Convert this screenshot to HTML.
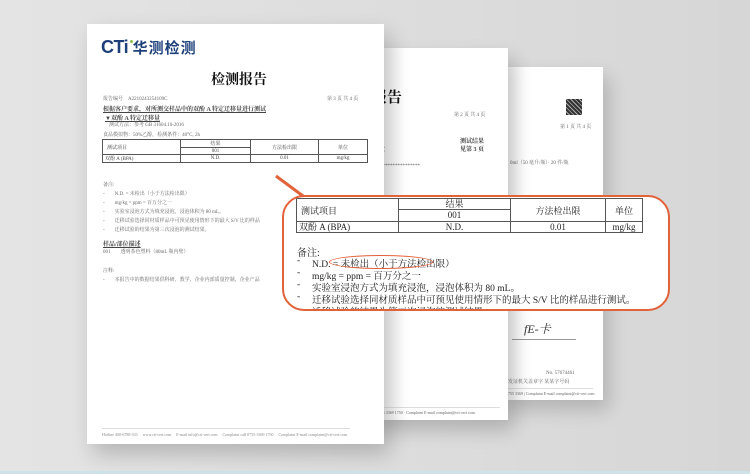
<!DOCTYPE html>
<html><head><meta charset="utf-8"><style>
*{margin:0;padding:0;box-sizing:border-box}
body{width:750px;height:474px;overflow:hidden;position:relative;background:linear-gradient(90deg,#e4e4e4 0%,#dcdcdc 60%,#d6d6d6 100%);font-family:"Liberation Serif","Noto Serif CJK SC",serif;color:#222}
.a{position:absolute;white-space:nowrap}
.pg{position:absolute;background:#fff}
.s{font-size:5px;color:#666}
.s6{font-size:6px;color:#444}
</style></head><body>
<div class="a" style="left:0;top:471px;width:750px;height:3px;background:#cfe2ea"></div>
<!-- page 3 -->
<div class="pg" style="left:500px;top:67px;width:103px;height:333px;box-shadow:6px 10px 18px rgba(0,0,0,.18);background:linear-gradient(90deg,#eee,#fff 25%)">
<div class="a" style="left:66px;top:32px;width:16px;height:16px;background:repeating-linear-gradient(45deg,#333 0 2px,#aaa 2px 3px)"></div>
<div class="a s" style="left:60px;top:56px">第 1 页 共 4 页</div>
<div class="a s" style="left:10px;top:92px">0ml（50 毫升/瓶）· 20 件/瓶</div>
<div class="a" style="left:24px;top:253px;font-size:12px;font-style:italic;color:#333">fЕ-卡</div>
<div class="a" style="left:12px;top:272px;width:64px;height:1px;background:#999"></div>
<div class="a s" style="left:46px;top:304px">No. 57674461</div>
<div class="a s" style="left:8px;top:311px">发证机关盖章字 某某字号码</div>
<div class="a" style="left:8px;top:321px;width:85px;height:1px;background:#ddd"></div>
<div class="a s" style="left:8px;top:324px;font-size:4px">755 3369 | Complaint E-mail complaint@cti-cert.com</div>
</div>
<!-- page 2 -->
<div class="pg" style="left:370px;top:48px;width:138px;height:372px;box-shadow:6px 10px 18px rgba(0,0,0,.2);background:linear-gradient(90deg,#e8e8e8,#fff 25%)">
<div class="a" style="left:2px;top:38px;font-size:15px;font-weight:bold;color:#111">报告</div>
<div class="a s" style="left:84px;top:63px">第 2 页 共 4 页</div>
<div class="a s6" style="left:90px;top:88px;font-weight:bold">测试结果</div>
<div class="a s6" style="left:90px;top:96px;font-weight:bold">见第 3 页</div>
<div class="a s" style="left:0;top:98px">生测试</div>
<div class="a s" style="left:0;top:114px">下见****************</div>
<div class="a" style="left:0;top:359px;width:130px;height:1px;background:#ddd"></div>
<div class="a s" style="left:0;top:362px;font-size:4px">call 0755 3369 1750 · Complaint E-mail complaint@cti-cert.com</div>
</div>
<!-- page 1 -->
<div class="pg" style="left:87px;top:24px;width:297px;height:420px;box-shadow:6px 10px 20px rgba(0,0,0,.2)">
<div class="a" style="left:14px;top:13px;font-family:'Liberation Sans','Noto Sans CJK SC',sans-serif;font-weight:bold;font-size:18px;color:#1d3f7a;letter-spacing:-0.5px">CTi <span style="font-size:15px;letter-spacing:1px">华测检测</span></div>
<div class="a" style="left:43px;top:16px;width:3px;height:3px;border-radius:50%;background:#8bc34a"></div>
<div class="a" style="left:124px;top:45px;font-size:14px;font-weight:bold;color:#111">检测报告</div>
<div class="a s" style="left:16px;top:71px">报告编号　A2210243254109C</div>
<div class="a s" style="left:240px;top:71px">第 3 页 共 4 页</div>
<div class="a s6" style="left:16px;top:80px;font-weight:bold;text-decoration:underline">根据客户要求，对所测交样品中的双酚 A 特定迁移量进行测试</div>
<div class="a s6" style="left:18px;top:89px;font-weight:bold;text-decoration:underline">▼双酚 A 特定迁移量</div>
<div class="a s" style="left:22px;top:97px">测试方法：参考 GB 31604.10-2016</div>
<div class="a s" style="left:16px;top:107px">食品模拟物：50%乙醇，检测条件：40°C, 2h</div>
<table class="a" style="left:15px;top:115px;width:266px;border-collapse:collapse;font-size:5px;color:#444">
<tr style="height:7px"><td rowspan="2" style="border:1px solid #555;width:78px;padding-left:4px">测试项目</td><td style="border:1px solid #555;width:70px;text-align:center">结果</td><td rowspan="2" style="border:1px solid #555;text-align:center;width:68px">方法检出限</td><td rowspan="2" style="border:1px solid #555;text-align:center">单位</td></tr>
<tr style="height:7px"><td style="border:1px solid #555;text-align:center">001</td></tr>
<tr style="height:7px"><td style="border:1px solid #555;padding-left:2px">双酚 A (BPA)</td><td style="border:1px solid #555;text-align:center">N.D.</td><td style="border:1px solid #555;text-align:center">0.01</td><td style="border:1px solid #555;text-align:center">mg/kg</td></tr>
</table>
<div class="a s" style="left:16px;top:157px">备注:</div>
<div class="a s" style="left:16px;top:166px">-　　N.D. = 未检出（小于方法检出限）</div>
<div class="a s" style="left:16px;top:175px">-　　mg/kg = ppm = 百万分之一</div>
<div class="a s" style="left:16px;top:184px">-　　实验室浸泡方式为填充浸泡，浸泡体积为 80 mL。</div>
<div class="a s" style="left:16px;top:193px">-　　迁移试验选择同材质样品中可预见使用情形下的最大 S/V 比的样品</div>
<div class="a s" style="left:16px;top:202px">-　　迁移试验的结果为第三次浸泡的测试结果。</div>
<div class="a s6" style="left:16px;top:215px;font-weight:bold;text-decoration:underline">样品/部位描述</div>
<div class="a s" style="left:16px;top:224px">001　　透明茶色塑料（80mL 瓶内壁）</div>
<div class="a s" style="left:16px;top:243px">注释:</div>
<div class="a s" style="left:16px;top:252px">-　　本报告中的数据结果供科研、教学、企业内部质量控制、企业产品</div>
<div class="a" style="left:15px;top:404px;width:248px;height:1px;background:#ddd"></div>
<div class="a s" style="left:15px;top:408px;font-size:4px;color:#888">Hotline 400-6788-333 　www.cti-cert.com 　E-mail info@cti-cert.com 　Complaint call 0755-3369 1750 　Complaint E-mail complaint@cti-cert.com</div>
</div>
<!-- connector -->
<svg class="a" style="left:0;top:0" width="750" height="474"><line x1="276" y1="176" x2="303" y2="196" stroke="#e2623a" stroke-width="3"/></svg>
<!-- callout -->
<div class="a" style="left:282px;top:195px;width:388px;height:116px;border:2.5px solid #e2623a;border-radius:22px;background:#fff;overflow:hidden">
<table class="a" style="left:12px;top:1px;width:347px;border-collapse:collapse;font-size:9px;color:#222">
<tr style="height:11px"><td rowspan="2" style="border:1px solid #555;width:102px;padding-left:4px">测试项目</td><td style="border:1px solid #555;width:112px;text-align:center;line-height:10px">结果</td><td rowspan="2" style="border:1px solid #555;width:95px;text-align:center">方法检出限</td><td rowspan="2" style="border:1px solid #555;text-align:center">单位</td></tr>
<tr style="height:12px"><td style="border:1px solid #555;text-align:center;line-height:11px">001</td></tr>
<tr style="height:11px;line-height:10px"><td style="border:1px solid #555;padding-left:2px">双酚 A (BPA)</td><td style="border:1px solid #555;text-align:center">N.D.</td><td style="border:1px solid #555;text-align:center">0.01</td><td style="border:1px solid #555;text-align:center">mg/kg</td></tr>
</table>
<div class="a" style="left:13px;top:47px;font-size:10px">备注:</div>
<div class="a" style="left:13px;top:59px;font-size:9.5px">-</div><div class="a" style="left:28px;top:59px;font-size:9.5px">N.D. = 未检出（小于方法检出限）</div>
<div class="a" style="left:13px;top:71px;font-size:9.5px">-</div><div class="a" style="left:28px;top:71px;font-size:9.5px">mg/kg = ppm = 百万分之一</div>
<div class="a" style="left:13px;top:83px;font-size:9.5px">-</div><div class="a" style="left:28px;top:83px;font-size:9.5px">实验室浸泡方式为填充浸泡，浸泡体积为 80 mL。</div>
<div class="a" style="left:13px;top:95px;font-size:9.5px">-</div><div class="a" style="left:28px;top:95px;font-size:9.5px">迁移试验选择同材质样品中可预见使用情形下的最大 S/V 比的样品进行测试。</div>
<div class="a" style="left:13px;top:107px;font-size:9.5px">-</div><div class="a" style="left:28px;top:107px;font-size:9.5px">迁移试验的结果为第三次浸泡的测试结果。</div>
<div class="a" style="left:45px;top:58px;width:104px;height:14px;border:1.3px solid #e2623a;border-radius:50%"></div>
</div>
</body></html>
